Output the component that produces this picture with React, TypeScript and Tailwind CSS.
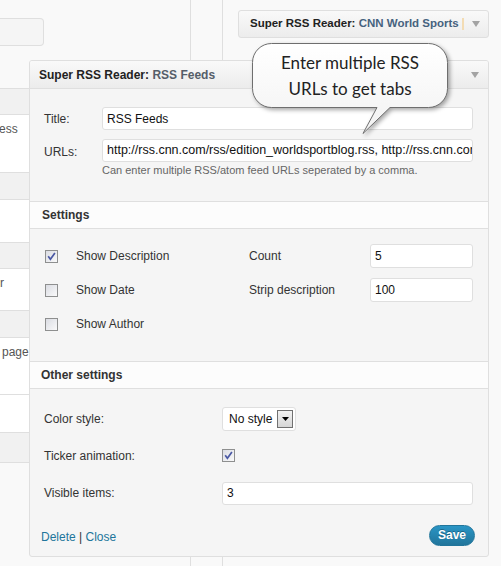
import React from 'react';

function Arrow() {
  return (
    <svg width="8" height="6" viewBox="0 0 8 6">
      <path d="M0 0 H8 L4 6 Z" fill="#a3a3a3" />
    </svg>
  );
}

function Checkbox({ checked }: { checked?: boolean }) {
  return (
    <svg width="13" height="13" viewBox="0 0 13 13">
      <defs>
        <linearGradient id="cb" x1="0" y1="0" x2="1" y2="1">
          <stop offset="0" stopColor="#d9dbe2" />
          <stop offset="1" stopColor="#fbfbfb" />
        </linearGradient>
      </defs>
      <rect x="0.5" y="0.5" width="12" height="12" fill="url(#cb)" stroke="#8e8f8f" />
      {checked && <path d="M3.2 6.3 L5.4 9.3 L9.9 3" fill="none" stroke="#4a58a4" strokeWidth="1.7" />}
    </svg>
  );
}

function Field({ value, className = '' }: { value: string; className?: string }) {
  return (
    <div
      className={`bg-white border border-[#dfdfdf] rounded-[3px] pl-[4px] flex items-center overflow-hidden whitespace-nowrap text-[#111] ${className}`}
    >
      {value}
    </div>
  );
}

function Band({ title, pad }: { title: string; pad: string }) {
  return (
    <div className={`h-[28px] border-y border-[#dfdfdf] bg-[#fcfcfc] flex items-center ${pad} font-bold text-[12px] text-[#333]`}>
      {title}
    </div>
  );
}

export default function App() {
  const strip = [
    { h: 'h-[26px]', bg: 'bg-[#f1f1f1]' },
    { h: 'h-[58px]', bg: 'bg-white', text: 'ess', indent: 'pl-0 -ml-[1px]' },
    { h: 'h-[27px]', bg: 'bg-[#f1f1f1]' },
    { h: 'h-[43px]', bg: 'bg-white' },
    { h: 'h-[26px]', bg: 'bg-[#f1f1f1]' },
    { h: 'h-[42px]', bg: 'bg-white', text: 'r', indent: 'pl-0' },
    { h: 'h-[27px]', bg: 'bg-[#f1f1f1]' },
    { h: 'h-[57px]', bg: 'bg-white', text: 'page', indent: 'pl-[2px]' },
    { h: 'h-[38px]', bg: 'bg-white' },
    { h: 'h-[30px]', bg: 'bg-[#f1f1f1]' },
  ];

  return (
    <div className="relative w-[501px] h-[566px] overflow-hidden bg-[#f9f9f9] font-['Liberation_Sans',Arial,sans-serif]">
      {/* page behind the floating widget */}
      <div className="flex h-full">
        <div className="w-[191px] border-r border-[#dfdfdf]">
          <div className="mt-[18px] w-[44px] h-[28px] border border-l-0 border-[#dfdfdf] rounded-r-[4px] bg-[#f5f5f5]" />
          <div className="mt-[42px] w-[30px] border-t border-[#dfdfdf]">
            {strip.map((row, i) => (
              <div
                key={i}
                className={`${row.h} ${row.bg} border-b border-[#dfdfdf] overflow-hidden whitespace-nowrap text-[12px] text-[#555] ${row.indent ?? ''}`}
              >
                {row.text && <div className="pt-[5px]">{row.text}</div>}
              </div>
            ))}
          </div>
        </div>
        <div className="w-[32px] border-r border-[#dfdfdf]" />
        <div className="flex-1">
          <div className="mt-[10px] ml-[15px] w-[251px] h-[28px] border border-[#dfdfdf] rounded-[3px] bg-linear-to-b from-[#f9f9f9] to-[#ececec] flex items-center pl-[11px] pr-[8px] text-[11.5px] font-bold whitespace-nowrap">
            <span className="text-[#222]">Super RSS Reader:&nbsp;</span>
            <span className="text-[#46627e]">CNN World Sports</span>
            <span className="inline-block w-[2px] h-[12px] bg-[#f3dcb4] ml-[3px]" />
            <span className="ml-auto flex">
              <Arrow />
            </span>
          </div>
        </div>
      </div>

      {/* the open widget, dragged over the page */}
      <div className="absolute left-[29px] top-[60px] w-[460px] h-[497px] border border-[#dfdfdf] rounded-[3px] bg-[#f5f5f5] flex flex-col overflow-hidden">
        <div className="h-[28px] shrink-0 border-b border-[#dfdfdf] bg-linear-to-b from-[#f9f9f9] to-[#ececec] flex items-center pl-[9px] pr-[9px] text-[12px] font-bold">
          <span className="text-[#222]">Super RSS Reader:&nbsp;</span>
          <span className="text-[#555e69]">RSS Feeds</span>
          <span className="ml-auto flex">
            <Arrow />
          </span>
        </div>

        <div className="pt-[18px] pl-[14px] pr-[15px]">
          <div className="flex items-center">
            <span className="w-[58px] text-[12px] text-[#333]">Title:</span>
            <Field value="RSS Feeds" className="flex-1 h-[23px] text-[12px]" />
          </div>
          <div className="flex items-center mt-[9px]">
            <span className="w-[58px] text-[12px] text-[#333] pt-[2px]">URLs:</span>
            <Field
              value="http://rss.cnn.com/rss/edition_worldsportblog.rss, http://rss.cnn.com"
              className="flex-1 h-[23px] text-[12.5px]"
            />
          </div>
          <div className="ml-[58px] mt-[2px] text-[11px] leading-[13px] text-[#666]">
            Can enter multiple RSS/atom feed URLs seperated by a comma.
          </div>
        </div>

        <div className="mt-[24px]">
          <Band title="Settings" pad="pl-[12px]" />
        </div>
        <div className="pt-[10px] pl-[15px] pr-[15px] text-[12px] text-[#333]">
          <div className="flex items-center h-[34px]">
            <div className="w-[31px] flex"><Checkbox checked /></div>
            <span className="w-[173px]">Show Description</span>
            <span className="w-[121px]">Count</span>
            <Field value="5" className="flex-1 h-[24px] text-[12px]" />
          </div>
          <div className="flex items-center h-[34px]">
            <div className="w-[31px] flex"><Checkbox /></div>
            <span className="w-[173px]">Show Date</span>
            <span className="w-[121px]">Strip description</span>
            <Field value="100" className="flex-1 h-[24px] text-[12px]" />
          </div>
          <div className="flex items-center h-[34px]">
            <div className="w-[31px] flex"><Checkbox /></div>
            <span>Show Author</span>
          </div>
        </div>

        <div className="mt-[20px]">
          <Band title="Other settings" pad="pl-[11px]" />
        </div>
        <div className="pt-[11px] pl-[14px] pr-[15px] text-[12px] text-[#333]">
          <div className="flex items-center h-[38px]">
            <span className="w-[178px]">Color style:</span>
            <div className="w-[74px] h-[24px] bg-white border border-[#dfdfdf] rounded-[3px] flex items-center pl-[6px] pr-[2px] justify-between text-[#111]">
              <span>No style</span>
              <div className="w-[16px] h-[18px] border border-[#707070] bg-linear-to-b from-[#f2f2f2] to-[#d6d6d6] flex items-center justify-center">
                <svg width="7" height="4" viewBox="0 0 7 4">
                  <path d="M0 0 H7 L3.5 4 Z" fill="#000" />
                </svg>
              </div>
            </div>
          </div>
          <div className="flex items-center h-[35px]">
            <span className="w-[178px]">Ticker animation:</span>
            <Checkbox checked />
          </div>
          <div className="flex items-center h-[40px]">
            <span className="w-[178px]">Visible items:</span>
            <Field value="3" className="flex-1 h-[23px] text-[12px]" />
          </div>
        </div>

        <div className="mt-[2px] h-[40px] flex items-center justify-between pl-[11px] pr-[13px] text-[12px]">
          <div className="pt-[3px]">
            <span className="text-[#21759b]">Delete</span>
            <span className="text-[#333]"> | </span>
            <span className="text-[#21759b]">Close</span>
          </div>
          <button className="w-[46px] h-[21px] rounded-full border border-[#21759b] bg-linear-to-b from-[#2a95c5] to-[#21759b] text-white font-bold text-[12px] [text-shadow:0_-1px_0_rgba(0,0,0,0.3)]">
            Save
          </button>
        </div>
      </div>

      {/* callout */}
      <div className="absolute left-[252px] top-[43px] w-[200px] h-[96px]">
        <svg width="200" height="96" viewBox="0 0 200 96" className="absolute inset-0 drop-shadow-[2px_2px_2px_rgba(0,0,0,0.35)]">
          <defs>
            <linearGradient id="bub" x1="0" y1="0" x2="0" y2="1">
              <stop offset="0" stopColor="#ffffff" />
              <stop offset="1" stopColor="#f2f2f2" />
            </linearGradient>
          </defs>
          <path
            d="M19.5 0.5 H176.5 A19 19 0 0 1 195.5 19.5 V45.5 A19 19 0 0 1 176.5 64.5 H138 L111 90.5 L125 64.5 H19.5 A19 19 0 0 1 0.5 45.5 V19.5 A19 19 0 0 1 19.5 0.5 Z"
            fill="url(#bub)"
            stroke="#6e6e6e"
          />
        </svg>
        <div className="relative w-[196px] pt-[7px] text-center text-[17px] leading-[26px] text-[#222] font-['Segoe_Print','Comic_Sans_MS','Lato',cursive]">
          <div>Enter multiple RSS</div>
          <div>URLs to get tabs</div>
        </div>
      </div>
    </div>
  );
}
